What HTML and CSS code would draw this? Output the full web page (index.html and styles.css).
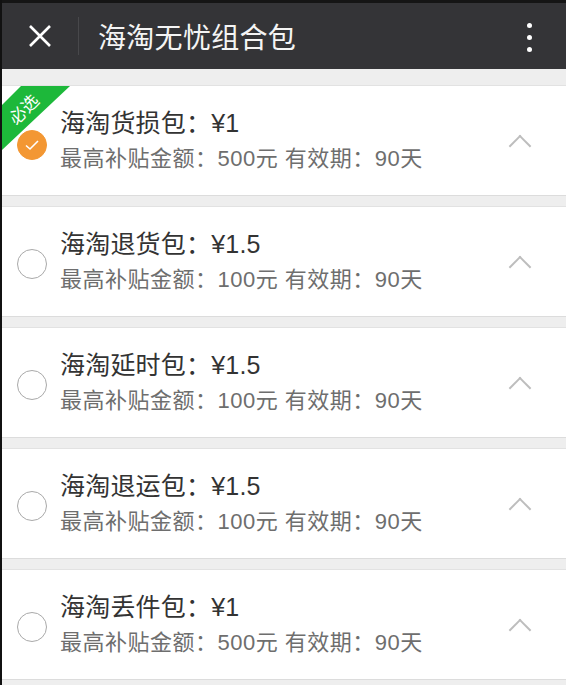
FILE: index.html
```html
<!DOCTYPE html>
<html lang="zh-CN">
  <head>
    <meta charset="UTF-8" />
    <title>海淘无忧组合包</title>
    <meta name="viewport" content="width=device-width, initial-scale=1.0" />
    <link rel="stylesheet" href="styles.css">
  </head>
  <body>
    <div class="page">
      <header class="top-bar">
        <span class="close-btn">
          <svg width="24" height="24" viewBox="0 0 24 24">
            <path d="M2 2 L22 22 M22 2 L2 22" stroke="#fff" stroke-width="2.6" fill="none" />
          </svg>
        </span>
        <span class="divider"></span>
        <h1 class="title">海淘无忧组合包</h1>
        <span class="more-btn">
          <i></i><i></i><i></i>
        </span>
      </header>

      <div class="list">
        <div class="item">
          <div class="ribbon"><span>必选</span></div>
          <span class="radio checked">
            <svg width="16" height="12" viewBox="0 0 16 12">
              <path d="M2 6.5 L6 10 L14 2" stroke="#fff" stroke-width="1.6" fill="none" />
            </svg>
          </span>
          <div class="info">
            <div class="name">海淘货损包：¥1</div>
            <div class="desc">最高补贴金额：500元 有效期：90天</div>
          </div>
          <span class="arrow"></span>
        </div>

        <div class="item">
          <span class="radio"></span>
          <div class="info">
            <div class="name">海淘退货包：¥1.5</div>
            <div class="desc">最高补贴金额：100元 有效期：90天</div>
          </div>
          <span class="arrow"></span>
        </div>

        <div class="item">
          <span class="radio"></span>
          <div class="info">
            <div class="name">海淘延时包：¥1.5</div>
            <div class="desc">最高补贴金额：100元 有效期：90天</div>
          </div>
          <span class="arrow"></span>
        </div>

        <div class="item">
          <span class="radio"></span>
          <div class="info">
            <div class="name">海淘退运包：¥1.5</div>
            <div class="desc">最高补贴金额：100元 有效期：90天</div>
          </div>
          <span class="arrow"></span>
        </div>

        <div class="item">
          <span class="radio"></span>
          <div class="info">
            <div class="name">海淘丢件包：¥1</div>
            <div class="desc">最高补贴金额：500元 有效期：90天</div>
          </div>
          <span class="arrow"></span>
        </div>
      </div>
    </div>
  </body>
</html>
```

FILE: styles.css
```css
html,
body {
  margin: 0;
  padding: 0;
  height: 100%;
  overflow: hidden;
}
body {
  font-family: "Liberation Sans", "Noto Sans CJK SC", sans-serif;
  background: #111;
}
.page {
  height: 100%;
  margin-left: 2px;
  background: #eeeeee;
}
.top-bar {
  height: 66px;
  border-top: 3px solid #151515;
  background: #343437;
  display: flex;
  align-items: center;
}
.close-btn {
  width: 24px;
  height: 24px;
  margin-left: 26px;
  display: flex;
}
.divider {
  width: 1px;
  height: 38px;
  margin-left: 26px;
  background: #48484b;
}
.title {
  margin: 0 0 0 19px;
  flex: 1;
  font-size: 28px;
  font-weight: normal;
  color: #f4f4f4;
  letter-spacing: 0.3px;
}
.more-btn {
  width: 6px;
  margin-right: 33px;
  display: flex;
  flex-direction: column;
  gap: 7px;
  margin-top: 2px;
}
.more-btn i {
  width: 5px;
  height: 5px;
  border-radius: 50%;
  background: #fff;
}
.list {
  padding-top: 16px;
}
.item {
  position: relative;
  overflow: hidden;
  height: 111px;
  box-sizing: border-box;
  margin-bottom: 10px;
  background: #fff;
  border-top: 1px solid #e2e2e2;
  border-bottom: 1px solid #dcdcdc;
  display: flex;
  align-items: center;
}
.ribbon {
  position: absolute;
  left: 0;
  top: 0;
  width: 68px;
  height: 68px;
  background: #1db83a;
  clip-path: polygon(19px 0, 68px 0, 0 64px, 0 19px);
}
.ribbon span {
  position: absolute;
  left: 4px;
  top: 10px;
  color: #fff;
  font-size: 17px;
  transform: rotate(-45deg);
}
.radio {
  width: 28px;
  height: 28px;
  margin: 5px 0 0 15px;
  border: 1.5px solid #a9a9a9;
  border-radius: 50%;
  box-sizing: content-box;
  flex-shrink: 0;
  display: flex;
  align-items: center;
  justify-content: center;
}
.radio.checked {
  background: #f39733;
  border-color: #f39733;
  margin-top: 9px;
}
.info {
  flex: 1;
  align-self: flex-start;
  padding: 21px 0 0 13px;
}
.name {
  font-size: 25px;
  line-height: 32px;
  color: #333;
  letter-spacing: 0.2px;
}
.desc {
  margin-top: 4px;
  font-size: 22px;
  line-height: 32px;
  color: #6e6e6e;
  letter-spacing: 0.5px;
}
.arrow {
  width: 14px;
  height: 14px;
  margin: 10px 38px 0 0;
  border-left: 2px solid #bdbdbd;
  border-top: 2px solid #bdbdbd;
  transform: rotate(45deg);
}
```
